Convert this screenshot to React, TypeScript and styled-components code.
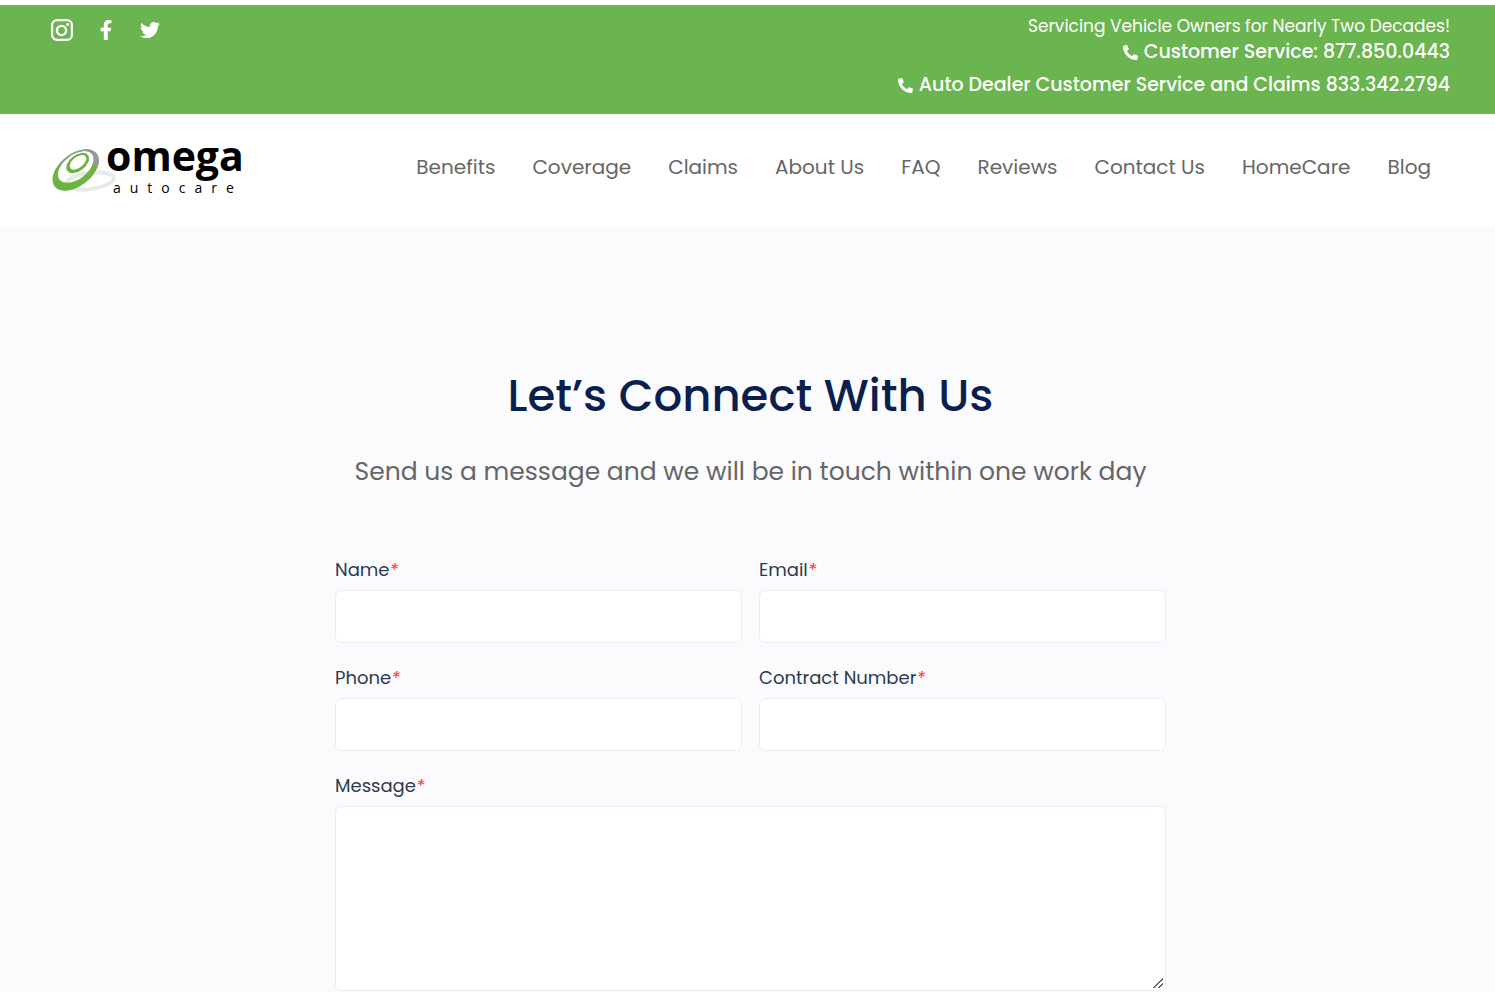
import React from "react";
import styled, { createGlobalStyle } from "styled-components";
import { FaFacebookF, FaPhoneAlt, FaTwitter } from "react-icons/fa";

const GlobalStyle = createGlobalStyle`
  *, *::before, *::after { box-sizing: border-box; }
  body {
    margin: 0;
    background: #fbfbfe;
    font-family: Poppins, Inter, "Liberation Sans", sans-serif;
    color: #666;
  }
  a { color: inherit; text-decoration: none; }
`;

const TopBar = styled.div`
  display: flex;
  justify-content: space-between;
  align-items: flex-start;
  padding: 8px 45px 16px 51px;
  border-top: 5px solid #fff;
  background: #6ab550;
  color: #fff;
`;

const SocialList = styled.div`
  display: flex;
  align-items: center;
  gap: 22px;
  padding-top: 6px;
`;

const SocialLink = styled.a`
  display: flex;
  justify-content: center;
  width: 22px;
`;

const ContactInfo = styled.div`
  display: flex;
  flex-direction: column;
  align-items: flex-end;
  font-size: 19px;
  line-height: 26px;
`;

const Tagline = styled.span`
  font-size: 17px;
`;

const PhoneLink = styled.a`
  display: flex;
  align-items: center;
  gap: 6px;
  font-weight: 500;

  & + & {
    margin-top: 7px;
  }
`;

const Header = styled.header`
  display: flex;
  justify-content: space-between;
  align-items: center;
  padding: 11px 64px 17px 50px;
  background: #fff;
`;

const LogoLink = styled.a`
  display: flex;
`;

const Nav = styled.nav`
  display: flex;
  gap: 37px;
  font-size: 20px;
  line-height: 30px;
`;

const Main = styled.main`
  max-width: 837px;
  margin: 0 auto;
  padding: 137px 0 60px 6px;
`;

const Title = styled.h1`
  margin: 0;
  font-size: 45px;
  font-weight: 500;
  line-height: 66px;
  text-align: center;
  color: #0b1f4f;
`;

const Lead = styled.p`
  margin: 24px 0 66px;
  font-size: 25px;
  line-height: 38px;
  text-align: center;
`;

const Form = styled.form`
  display: grid;
  grid-template-columns: 1fr 1fr;
  gap: 22px 17px;
`;

const Field = styled.div<{ $wide?: boolean }>`
  display: flex;
  flex-direction: column;
  gap: 7px;
  grid-column: ${(p) => (p.$wide ? "1 / -1" : "auto")};
`;

const Label = styled.label`
  font-size: 18px;
  line-height: 26px;
  color: #2b3a4f;
`;

const Required = styled.em`
  color: #f33;
`;

const Input = styled.input`
  width: 100%;
  height: 53px;
  padding: 0 16px;
  border: 1px solid #ebebfa;
  border-radius: 6px;
  background: #fff;
  font: inherit;
`;

const TextArea = styled.textarea`
  display: block;
  width: 100%;
  height: 185px;
  padding: 16px;
  border: 1px solid #ebebfa;
  border-radius: 6px;
  background: #fff;
  font: inherit;
  resize: vertical;

  &::-webkit-resizer {
    background: linear-gradient(
        135deg,
        transparent 46%,
        #666 46% 56%,
        transparent 56% 73%,
        #666 73% 83%,
        transparent 83%
      )
      3px 3px / 10px 10px no-repeat;
  }
`;

const InstagramIcon = () => (
  <svg width="22" height="22" viewBox="0 0 22 22" fill="none" stroke="#fff" strokeWidth="2.2">
    <rect x="1.1" y="1.1" width="19.8" height="19.8" rx="5" />
    <circle cx="10.5" cy="11.5" r="4.6" strokeWidth="2.4" />
    <circle cx="16.6" cy="5.4" r="1.5" fill="#fff" stroke="none" />
  </svg>
);

const RING =
  "M27 105a80 48 0 1 0 160 0a80 48 0 1 0 -160 0Z M51 98a62 36 0 1 0 124 0a62 36 0 1 0 -124 0Z";

const Logo = () => (
  <svg width="200" height="84" viewBox="0 -17 200 84" role="img" aria-label="Omega Autocare">
    <defs>
      <clipPath id="ringTop">
        <path d="M0 0H190V93L50 87L0 87Z" />
      </clipPath>
    </defs>
    <g transform="translate(-10 -7) scale(.33333)">
      <ellipse
        cx="150"
        cy="138"
        rx="72"
        ry="24"
        transform="rotate(-7 150 138)"
        fill="none"
        stroke="#e6ebe8"
        strokeWidth="12"
      />
      <path fillRule="evenodd" fill="#6db33f" transform="rotate(-38 107 105)" d={RING} />
      <g clipPath="url(#ringTop)">
        <path fillRule="evenodd" fill="#96989d" transform="rotate(-38 107 105)" d={RING} />
      </g>
      <path
        fillRule="evenodd"
        fill="#6db33f"
        transform="rotate(-38 113 84)"
        d="M74 84a39 24 0 1 0 78 0a39 24 0 1 0 -78 0Z M86 83a29 16 0 1 0 58 0a29 16 0 1 0 -58 0Z"
      />
    </g>
    <text x="56" y="29" fontFamily="'Open Sans', sans-serif" fontSize="41" fontWeight="700" fill="#000">
      omega
    </text>
    <text x="63" y="51" fontFamily="'Open Sans', sans-serif" fontSize="14" fontWeight="500" letterSpacing="9" fill="#000">
      autocare
    </text>
  </svg>
);

const links = ["Benefits", "Coverage", "Claims", "About Us", "FAQ", "Reviews", "Contact Us", "HomeCare", "Blog"];

const fields = [
  { id: "name", label: "Name", type: "text" },
  { id: "email", label: "Email", type: "email" },
  { id: "phone", label: "Phone", type: "tel" },
  { id: "contract", label: "Contract Number", type: "text" },
];

export default function App() {
  return (
    <>
      <GlobalStyle />
      <TopBar>
        <SocialList>
          <SocialLink href="#instagram" aria-label="Instagram"><InstagramIcon /></SocialLink>
          <SocialLink href="#facebook" aria-label="Facebook"><FaFacebookF size={20} /></SocialLink>
          <SocialLink href="#twitter" aria-label="Twitter"><FaTwitter size={20} /></SocialLink>
        </SocialList>
        <ContactInfo>
          <Tagline>Servicing Vehicle Owners for Nearly Two Decades!</Tagline>
          <PhoneLink href="tel:8778500443"><FaPhoneAlt size={15} />Customer Service: 877.850.0443</PhoneLink>
          <PhoneLink href="tel:8333422794"><FaPhoneAlt size={15} />Auto Dealer Customer Service and Claims 833.342.2794</PhoneLink>
        </ContactInfo>
      </TopBar>
      <Header>
        <LogoLink href="#home"><Logo /></LogoLink>
        <Nav>
          {links.map((l) => (
            <a key={l} href={`#${l.toLowerCase().replace(" ", "-")}`}>{l}</a>
          ))}
        </Nav>
      </Header>
      <Main>
        <Title>Let’s Connect With Us</Title>
        <Lead>Send us a message and we will be in touch within one work day</Lead>
        <Form>
          {fields.map((f) => (
            <Field key={f.id}>
              <Label htmlFor={f.id}>{f.label}<Required>*</Required></Label>
              <Input id={f.id} type={f.type} required />
            </Field>
          ))}
          <Field $wide>
            <Label htmlFor="message">Message<Required>*</Required></Label>
            <TextArea id="message" required />
          </Field>
        </Form>
      </Main>
    </>
  );
}
